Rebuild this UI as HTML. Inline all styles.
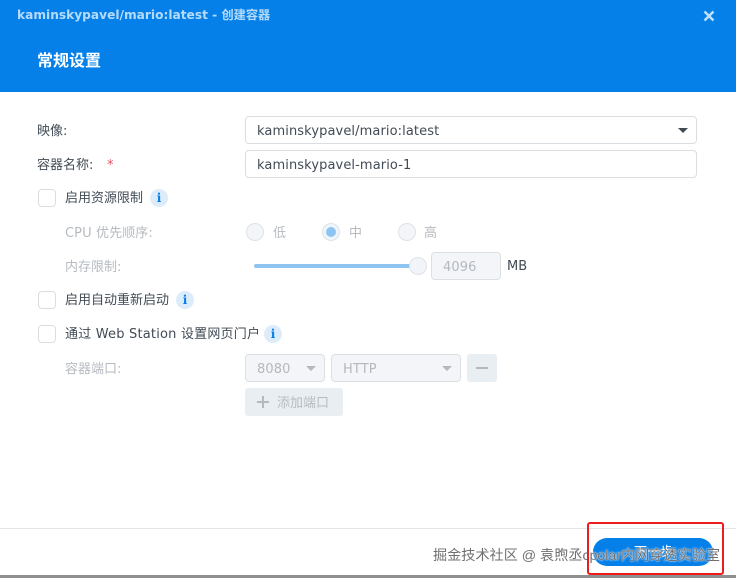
<!DOCTYPE html>
<html><head><meta charset="utf-8"><style>
*{box-sizing:border-box}
html,body{margin:0;padding:0}
body{width:736px;height:578px;position:relative;overflow:hidden;background:#fff;font-family:"DejaVu Sans","Noto Sans CJK SC",sans-serif;font-size:13px;color:#414b55}
.a{position:absolute;white-space:nowrap}
.l{line-height:18px;height:18px}
.hdr{left:0;top:0;width:736px;height:92px;background:#0580e9}
.box{border:1px solid #d9dee3;border-radius:4px;background:#fff;height:28px;line-height:30px;padding-left:11px;letter-spacing:.1px}
.dis{background:#f3f5f8;border-color:#dbe0e5;color:#b4b9bf}
.cb{width:18px;height:18px;left:38px;border:1px solid #d9dee3;border-radius:4px;background:#fff}
.info{width:18px;height:18px;border-radius:50%;background:#dcecfa;color:#0580e9;font:bold 12px/18px "DejaVu Serif","Liberation Serif",serif;text-align:center}
.g{color:#b6bbc1}
.r{width:18px;height:18px;border-radius:50%;border:1px solid #dfe3e7;background:#f3f5f8;top:223px}
.tri{width:0;height:0;border-left:5px solid transparent;border-right:5px solid transparent;border-top:5px solid #414b55}
</style></head><body>
<div class="a hdr"></div>
<div class="a l" style="left:17px;top:6px;font-weight:bold;font-size:12.2px;color:#b5dbfb">kaminskypavel/mario:latest - 创建容器</div>
<svg class="a" style="left:703px;top:10px" width="12" height="12" viewBox="0 0 12 12"><path d="M1.5 1.5L10.5 10.5M10.5 1.5L1.5 10.5" stroke="#c2e1fb" stroke-width="2.4"/></svg>
<div class="a" style="left:37px;top:50px;font-size:16px;line-height:22px;font-weight:bold;color:#fff">常规设置</div>

<div class="a l" style="left:37px;top:123px">映像:</div>
<div class="a box" style="left:245px;top:116px;width:452px">kaminskypavel/mario:latest</div>
<div class="a tri" style="left:678px;top:128px"></div>
<div class="a l" style="left:37px;top:157px">容器名称:</div>
<div class="a l" style="left:107px;top:157px;color:#e2525c">*</div>
<div class="a box" style="left:245px;top:150px;width:452px">kaminskypavel-mario-1</div>

<div class="a cb" style="top:189px"></div>
<div class="a l" style="left:65px;top:190px">启用资源限制</div>
<div class="a info" style="left:150px;top:189px">i</div>
<div class="a l g" style="left:65px;top:225px;letter-spacing:.1px">CPU 优先顺序:</div>
<div class="a r" style="left:246px"></div>
<div class="a l g" style="left:273px;top:225px">低</div>
<div class="a r" style="left:322px;background:#eef5fc"></div>
<div class="a" style="left:326px;top:227px;width:10px;height:10px;border-radius:50%;background:#8fc4f1"></div>
<div class="a l g" style="left:349px;top:225px">中</div>
<div class="a r" style="left:398px"></div>
<div class="a l g" style="left:424px;top:225px">高</div>

<div class="a l g" style="left:65px;top:259px">内存限制:</div>
<div class="a" style="left:254px;top:264px;width:160px;height:4px;border-radius:2px;background:#8fc4f1"></div>
<div class="a" style="left:409px;top:257px;width:18px;height:18px;border-radius:50%;border:1px solid #dfe3e7;background:#f1f4f8"></div>
<div class="a box dis" style="left:431px;top:252px;width:70px">4096</div>
<div class="a l" style="left:507px;top:258px">MB</div>

<div class="a cb" style="top:291px"></div>
<div class="a l" style="left:65px;top:292px">启用自动重新启动</div>
<div class="a info" style="left:176px;top:291px">i</div>

<div class="a cb" style="top:325px"></div>
<div class="a l" style="left:65px;top:326px;letter-spacing:.2px">通过 Web Station 设置网页门户</div>
<div class="a info" style="left:264px;top:325px">i</div>

<div class="a l g" style="left:65px;top:361px">容器端口:</div>
<div class="a box dis" style="left:245px;top:354px;width:80px">8080</div>
<div class="a tri" style="left:306px;top:366px;border-top-color:#b4b9bf"></div>
<div class="a box dis" style="left:331px;top:354px;width:130px">HTTP</div>
<div class="a tri" style="left:442px;top:366px;border-top-color:#b4b9bf"></div>
<div class="a" style="left:467px;top:354px;width:30px;height:28px;background:#e9eef2;border-radius:3px"></div>
<div class="a" style="left:476px;top:367px;width:12px;height:2px;background:#b4b9bf"></div>
<div class="a" style="left:245px;top:388px;width:98px;height:28px;background:#e9eef2;border-radius:3px"></div>
<svg class="a" style="left:257px;top:396px" width="12" height="12" viewBox="0 0 12 12"><path d="M6 0V12M0 6H12" stroke="#b4b9bf" stroke-width="2"/></svg>
<div class="a l g" style="left:277px;top:395px">添加端口</div>

<div class="a" style="left:0;top:528px;width:736px;height:1px;background:#e3e6e9"></div>
<div class="a" style="left:593px;top:538px;width:120px;height:28px;border-radius:14px;background:#0580e9"></div>
<div class="a l" style="left:634px;top:544px;color:#fff">下一步</div>
<div class="a l" style="left:433px;top:546px;color:#707070;font-family:'Liberation Sans','Noto Sans CJK SC',sans-serif;font-size:14.15px;text-shadow:0 0 2px #fff,0 0 1px #fff">掘金技术社区 @ 袁煦丞cpolar内网穿透实验室</div>
<div class="a" style="left:0;top:575px;width:736px;height:3px;background:#8f8f8f"></div>
<div class="a" style="left:587px;top:522px;width:137px;height:53px;border:2.5px solid #ee1c1c;border-radius:3px"></div>
</body></html>
